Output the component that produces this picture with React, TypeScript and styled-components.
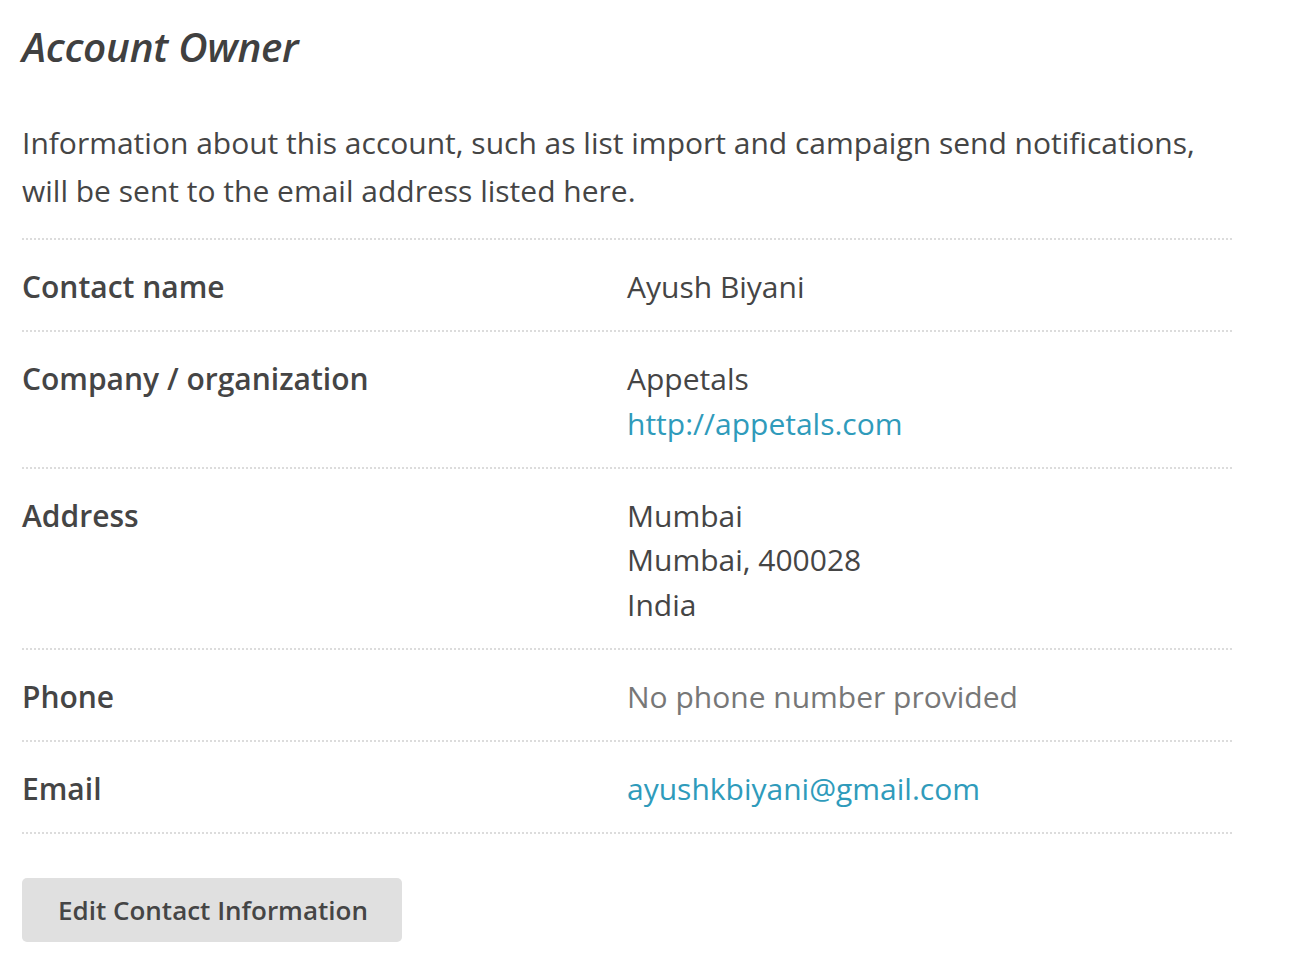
import React from "react";
import styled, { createGlobalStyle } from "styled-components";

const Global = createGlobalStyle`
  html, body { margin: 0; padding: 0; background: #ffffff; }
  body { font-family: "Open Sans", "Liberation Sans", sans-serif; color: #454545; }
`;

const Page = styled.div`
  width: 1210px;
  padding: 18px 0 0 22px;
`;

const Title = styled.h1`
  margin: 0;
  font-size: 40.5px;
  line-height: 57px;
  font-style: italic;
  font-weight: 600;
  color: #404040;
  letter-spacing: -0.3px;
`;

const Description = styled.p`
  margin: 44px 0 23px;
  font-size: 30px;
  line-height: 48px;
  color: #454545;
`;

const Table = styled.div`
  display: flex;
  flex-direction: column;
  border-bottom: 2px dotted #dcdcdc;
`;

const Row = styled.div`
  display: grid;
  grid-template-columns: 1fr 1fr;
  padding: 25px 0 20.5px;
  border-top: 2px dotted #dcdcdc;
`;

const Label = styled.div`
  font-size: 30px;
  line-height: 44.5px;
  font-weight: 600;
  color: #454545;
`;

const Value = styled.div`
  display: flex;
  flex-direction: column;
  font-size: 30px;
  line-height: 44.5px;
  color: #454545;
`;

const Line = styled.span<{ $tone?: "link" | "muted" }>`
  color: ${(p) => (p.$tone === "link" ? "#2f9bbb" : p.$tone === "muted" ? "#777777" : "#454545")};
`;

const Button = styled.button`
  margin-top: 44px;
  width: 380px;
  height: 64px;
  border: none;
  border-radius: 5px;
  background: #e0e0e0;
  color: #454545;
  font-family: "Open Sans", "Liberation Sans", sans-serif;
  font-size: 26px;
  font-weight: 600;
  text-align: left;
  padding: 0 0 0 36px;
  cursor: pointer;
`;

type Item = { label: string; lines: { text: string; tone?: "link" | "muted" }[] };

const items: Item[] = [
  { label: "Contact name", lines: [{ text: "Ayush Biyani" }] },
  {
    label: "Company / organization",
    lines: [{ text: "Appetals" }, { text: "http://appetals.com", tone: "link" }],
  },
  {
    label: "Address",
    lines: [{ text: "Mumbai" }, { text: "Mumbai, 400028" }, { text: "India" }],
  },
  { label: "Phone", lines: [{ text: "No phone number provided", tone: "muted" }] },
  { label: "Email", lines: [{ text: "ayushkbiyani@gmail.com", tone: "link" }] },
];

export default function App() {
  return (
    <Page>
      <Global />
      <Title>Account Owner</Title>
      <Description>
        Information about this account, such as list import and campaign send notifications,
        <br />
        will be sent to the email address listed here.
      </Description>
      <Table>
        {items.map((it) => (
          <Row key={it.label}>
            <Label>{it.label}</Label>
            <Value>
              {it.lines.map((l) => (
                <Line key={l.text} $tone={l.tone}>
                  {l.text}
                </Line>
              ))}
            </Value>
          </Row>
        ))}
      </Table>
      <Button>Edit Contact Information</Button>
    </Page>
  );
}
